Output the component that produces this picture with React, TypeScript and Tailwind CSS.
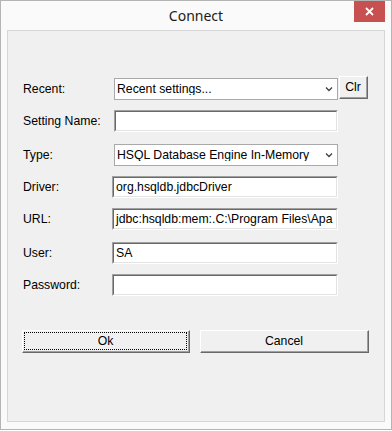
import React from "react";

const font = { fontFamily: '"Liberation Sans", Arial, sans-serif' };

function Chevron() {
  return (
    <svg width="8" height="6" viewBox="0 0 8 6" className="shrink-0">
      <polyline points="1,1.5 4,4.5 7,1.5" fill="none" stroke="#404040" strokeWidth="1.3" />
    </svg>
  );
}

function Select({ value }: { value: string }) {
  return (
    <div className="flex h-[22px] w-[224px] items-center border border-[#a9a9a9] bg-white pl-[2px] pr-[4px]">
      <span className="flex-1 truncate text-[12.25px] leading-none text-black">{value}</span>
      <Chevron />
    </div>
  );
}

function Field({ value = "", width }: { value?: string; width: string }) {
  return (
    <div className={`h-[22px] ${width} border-t border-l border-t-[#a0a0a0] border-l-[#a0a0a0] border-r border-b border-r-white border-b-white`}>
      <div className="flex h-full items-center overflow-hidden whitespace-nowrap border-t border-l border-t-[#696969] border-l-[#696969] border-r border-b border-r-[#e3e3e3] border-b-[#e3e3e3] bg-white pl-[2px] text-[12.25px] leading-none text-black">
        {value}
      </div>
    </div>
  );
}

function RaisedButton({ label, width, focused }: { label: string; width: string; focused?: boolean }) {
  return (
    <div className={`${width} h-[23px] border-t border-l border-t-white border-l-white border-r border-b border-r-[#696969] border-b-[#696969]`}>
      <div className="flex h-full items-center justify-center border-r border-b border-r-[#a0a0a0] border-b-[#a0a0a0] bg-[#f0f0f0] p-[1px]">
        <div
          className={`flex h-full w-full items-center justify-center text-[12.25px] leading-none text-black ${
            focused ? "border border-dotted border-black" : ""
          }`}
        >
          {label}
        </div>
      </div>
    </div>
  );
}

function Label({ text, width }: { text: string; width: string }) {
  return <div className={`${width} shrink-0 text-[12.25px] leading-none text-black`}>{text}</div>;
}

export default function App() {
  return (
    <div className="h-[431px] w-[392px] bg-white" style={font}>
      <div className="relative flex h-[430px] w-[392px] flex-col border border-[#b4b4b4] bg-[#fafafa]">
        <div className="flex h-[29px] items-center justify-center">
          <span className="text-[14px] text-[#1a1a1a]" style={{ fontFamily: '"Noto Sans", sans-serif' }}>
            Connect
          </span>
        </div>
        <div className="absolute right-[6px] top-0 flex h-[21px] w-[31px] items-center justify-center bg-[#c75050]">
          <svg width="9" height="9" viewBox="0 0 9 9">
            <path d="M1 1 L8 8 M8 1 L1 8" stroke="white" strokeWidth="1.8" />
          </svg>
        </div>

        <div className="mx-[6px] flex h-[392px] flex-col border border-[#d6d6d6] bg-[#f0f0f0] pl-[15px]">
          <div className="mt-[47px] flex h-[22px] items-center">
            <Label text="Recent:" width="w-[91px]" />
            <Select value="Recent settings..." />
            <div className="-mt-[3px] ml-[1px]">
              <RaisedButton label="Clr" width="w-[29px]" />
            </div>
          </div>
          <div className="mt-[10px] flex h-[22px] items-center">
            <Label text="Setting Name:" width="w-[91px]" />
            <Field width="w-[224px]" />
          </div>
          <div className="mt-[12px] flex h-[22px] items-center">
            <Label text="Type:" width="w-[91px]" />
            <Select value="HSQL Database Engine In-Memory" />
          </div>
          <div className="mt-[10px] flex h-[22px] items-center">
            <Label text="Driver:" width="w-[89px]" />
            <Field width="w-[226px]" value="org.hsqldb.jdbcDriver" />
          </div>
          <div className="mt-[10px] flex h-[22px] items-center">
            <Label text="URL:" width="w-[89px]" />
            <Field width="w-[226px]" value="jdbc:hsqldb:mem:.C:\Program Files\Apa" />
          </div>
          <div className="mt-[12px] flex h-[22px] items-center">
            <Label text="User:" width="w-[89px]" />
            <Field width="w-[226px]" value="SA" />
          </div>
          <div className="mt-[10px] flex h-[22px] items-center">
            <Label text="Password:" width="w-[89px]" />
            <Field width="w-[226px]" />
          </div>
          <div className="-ml-[1px] mt-[34px] flex gap-[10px]">
            <RaisedButton label="Ok" width="w-[168px]" focused />
            <RaisedButton label="Cancel" width="w-[169px]" />
          </div>
        </div>
      </div>
    </div>
  );
}
